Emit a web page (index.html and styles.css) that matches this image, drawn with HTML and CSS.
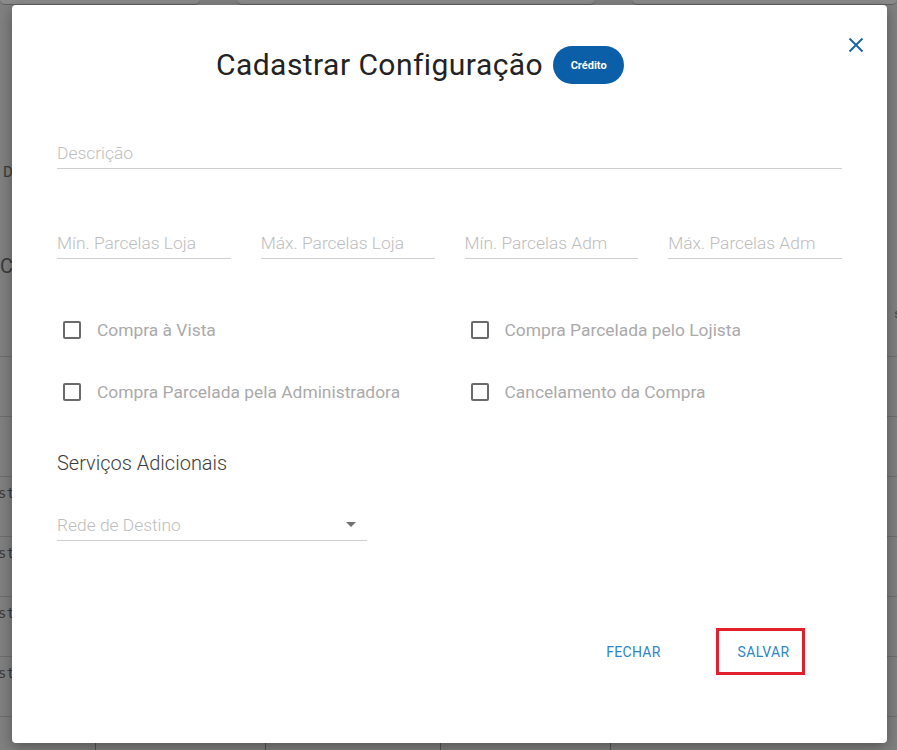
FILE: index.html
```html
<!DOCTYPE html>
<html lang="pt-BR">
<head>
<meta charset="utf-8">
<title>Cadastrar Configuração</title>
<link rel="stylesheet" href="styles.css">
</head>
<body>
<div class="page">
  <div class="tabs">
    <div class="tab tab-a"></div>
    <div class="tab tab-b"></div>
    <div class="tab tab-c"></div>
  </div>
  <div class="bg-intro">
    <div class="bg-d">D</div>
    <div class="bg-c">C</div>
  </div>
  <div class="bg-table">
    <div class="bg-head"><span></span><span class="bg-s">s</span></div>
    <div class="bg-row"></div>
    <div class="bg-row"></div>
    <div class="bg-row"><span class="bg-txt">ste</span></div>
    <div class="bg-row"><span class="bg-txt">ste</span></div>
    <div class="bg-row"><span class="bg-txt">ste</span></div>
    <div class="bg-row"><span class="bg-txt">ste</span></div>
    <div class="bg-row bg-last">
      <span class="cell"></span><span class="cell bl"></span><span class="cell bl"></span><span class="cell bl"></span><span class="cell bl x">×</span>
    </div>
  </div>
</div>

<div class="modal">
  <button class="close" aria-label="Fechar">
    <svg width="16" height="16" viewBox="0 0 16 16"><path d="M1.5 1.5 L14.5 14.5 M14.5 1.5 L1.5 14.5" stroke="#1a68a8" stroke-width="2" fill="none"/></svg>
  </button>
  <div class="header">
    <h1 class="title">Cadastrar Configuração</h1>
    <span class="badge">Crédito</span>
  </div>

  <div class="field full"><span class="ph">Descrição</span></div>

  <div class="row4">
    <div class="field"><span class="ph">Mín. Parcelas Loja</span></div>
    <div class="field"><span class="ph">Máx. Parcelas Loja</span></div>
    <div class="field"><span class="ph">Mín. Parcelas Adm</span></div>
    <div class="field"><span class="ph">Máx. Parcelas Adm</span></div>
  </div>

  <div class="checks">
    <label class="check"><span class="box"></span><span class="clabel">Compra à Vista</span></label>
    <label class="check"><span class="box"></span><span class="clabel">Compra Parcelada pelo Lojista</span></label>
    <label class="check"><span class="box"></span><span class="clabel">Compra Parcelada pela Administradora</span></label>
    <label class="check"><span class="box"></span><span class="clabel">Cancelamento da Compra</span></label>
  </div>

  <h2 class="section">Serviços Adicionais</h2>

  <div class="field select"><span class="ph">Rede de Destino</span><span class="arrow"></span></div>

  <div class="footer">
    <button class="btn">FECHAR</button>
    <button class="btn btn-save">SALVAR</button>
  </div>
</div>
</body>
</html>
```

FILE: styles.css
```css
* { box-sizing: border-box; }
html, body { margin: 0; padding: 0; }
body {
  font-family: Roboto, "Noto Sans", sans-serif;
  background: #808080;
  width: 897px;
  height: 750px;
  overflow: hidden;
  position: relative;
}

/* dimmed background page */
.page { height: 750px; overflow: hidden; }
.tabs { display: flex; height: 5px; }
.tab {
  height: 5px;
  background: #8b8b8b;
  border-bottom: 1px solid #5e5e5e;
  border-radius: 0 0 8px 8px;
}
.tab-a { width: 200px; }
.tab-b { width: 358px; margin-left: 37px; }
.tab-c { flex: 1; margin-left: 37px; }

.bg-intro { height: 295px; color: #3a3a3a; }
.bg-d { font-size: 15px; padding: 157px 0 0 3px; line-height: 20px; }
.bg-c { font-size: 20px; padding: 72px 0 0 0; line-height: 24px; }

.bg-head { height: 56px; display: flex; justify-content: space-between; color: #444; font-size: 13px; }
.bg-s { padding-top: 6px; margin-right: -4px; }
.bg-row {
  height: 60px;
  border-top: 1px solid #6e6e6e;
  color: #3a3a3a;
  font-size: 14px;
  font-family: "DejaVu Sans Mono", monospace;
}
.bg-txt { display: block; padding-top: 8px; margin-left: -2px; }
.bg-last { display: grid; grid-template-columns: 95px 170px 175px 170px 1fr; }
.cell.bl { border-left: 1px solid #555; }
.cell.x { padding-left: 173px; font-family: "DejaVu Sans", sans-serif; font-size: 16px; line-height: 34px; color: #333; }

/* modal */
.modal {
  position: absolute;
  left: 12px;
  top: 5px;
  width: 875px;
  height: 738px;
  background: #fff;
  border-radius: 4px;
  box-shadow: 0 4px 14px rgba(0,0,0,0.35);
  padding: 41px 45px 0 45px;
}
.close {
  position: absolute;
  right: 23px;
  top: 32px;
  width: 16px;
  height: 16px;
  padding: 0;
  border: 0;
  background: none;
  display: flex;
}
.header {
  display: flex;
  align-items: center;
  height: 38px;
  padding-left: 159px;
  gap: 10px;
}
.title {
  margin: 0;
  font-size: 30px;
  font-weight: 400;
  color: #232323;
  line-height: 38px;
  letter-spacing: 0.45px;
}
.badge {
  display: inline-flex;
  align-items: center;
  justify-content: center;
  height: 38px;
  width: 71px;
  border-radius: 19px;
  background: #0b5ea8;
  color: #fff;
  font-size: 11px;
  font-weight: 700;
}

.field {
  border-bottom: 1px solid #cfcfcf;
  padding: 4px 0 5px 0;
  line-height: 20px;
  height: 30px;
}
.ph {
  font-size: 17.4px;
  font-weight: 300;
  color: #bdbdbd;
}
.full { margin-top: 55px; }

.row4 {
  margin-top: 60px;
  display: grid;
  grid-template-columns: repeat(4, 1fr);
  column-gap: 30px;
}

.checks {
  margin-top: 59px;
  display: grid;
  grid-template-columns: 1fr 1fr;
  column-gap: 30px;
  row-gap: 38px;
}
.check { display: flex; align-items: center; height: 24px; }
.box {
  width: 18px;
  height: 18px;
  border: 2px solid #6a6a6a;
  border-radius: 2px;
  margin-left: 6px;
  margin-right: 16px;
}
.clabel { font-size: 17.4px; color: #aaaaaa; font-weight: 400; }

.section {
  margin: 47px 0 0 0;
  font-size: 20px;
  font-weight: 300;
  color: #3d3d3d;
  line-height: 24px;
}

.select {
  margin-top: 36px;
  width: 310px;
  display: flex;
  align-items: center;
  justify-content: space-between;
}
.arrow {
  width: 0;
  height: 0;
  border-left: 5px solid transparent;
  border-right: 5px solid transparent;
  border-top: 5px solid #707070;
  margin-right: 11px;
  margin-top: -2px;
}

.footer {
  margin-top: 87px;
  display: flex;
  justify-content: flex-end;
  align-items: center;
  gap: 38px;
  padding-right: 37px;
}
.btn {
  font-family: Roboto, sans-serif;
  font-size: 14px;
  font-weight: 400;
  letter-spacing: 0.3px;
  color: #2e86c6;
  background: none;
  border: 0;
  min-width: 89px;
  height: 47px;
  padding: 0 16px;
}
.btn-save {
  border: 3px solid #e0202a;
  padding: 0 12px 0 18px;
}
```
